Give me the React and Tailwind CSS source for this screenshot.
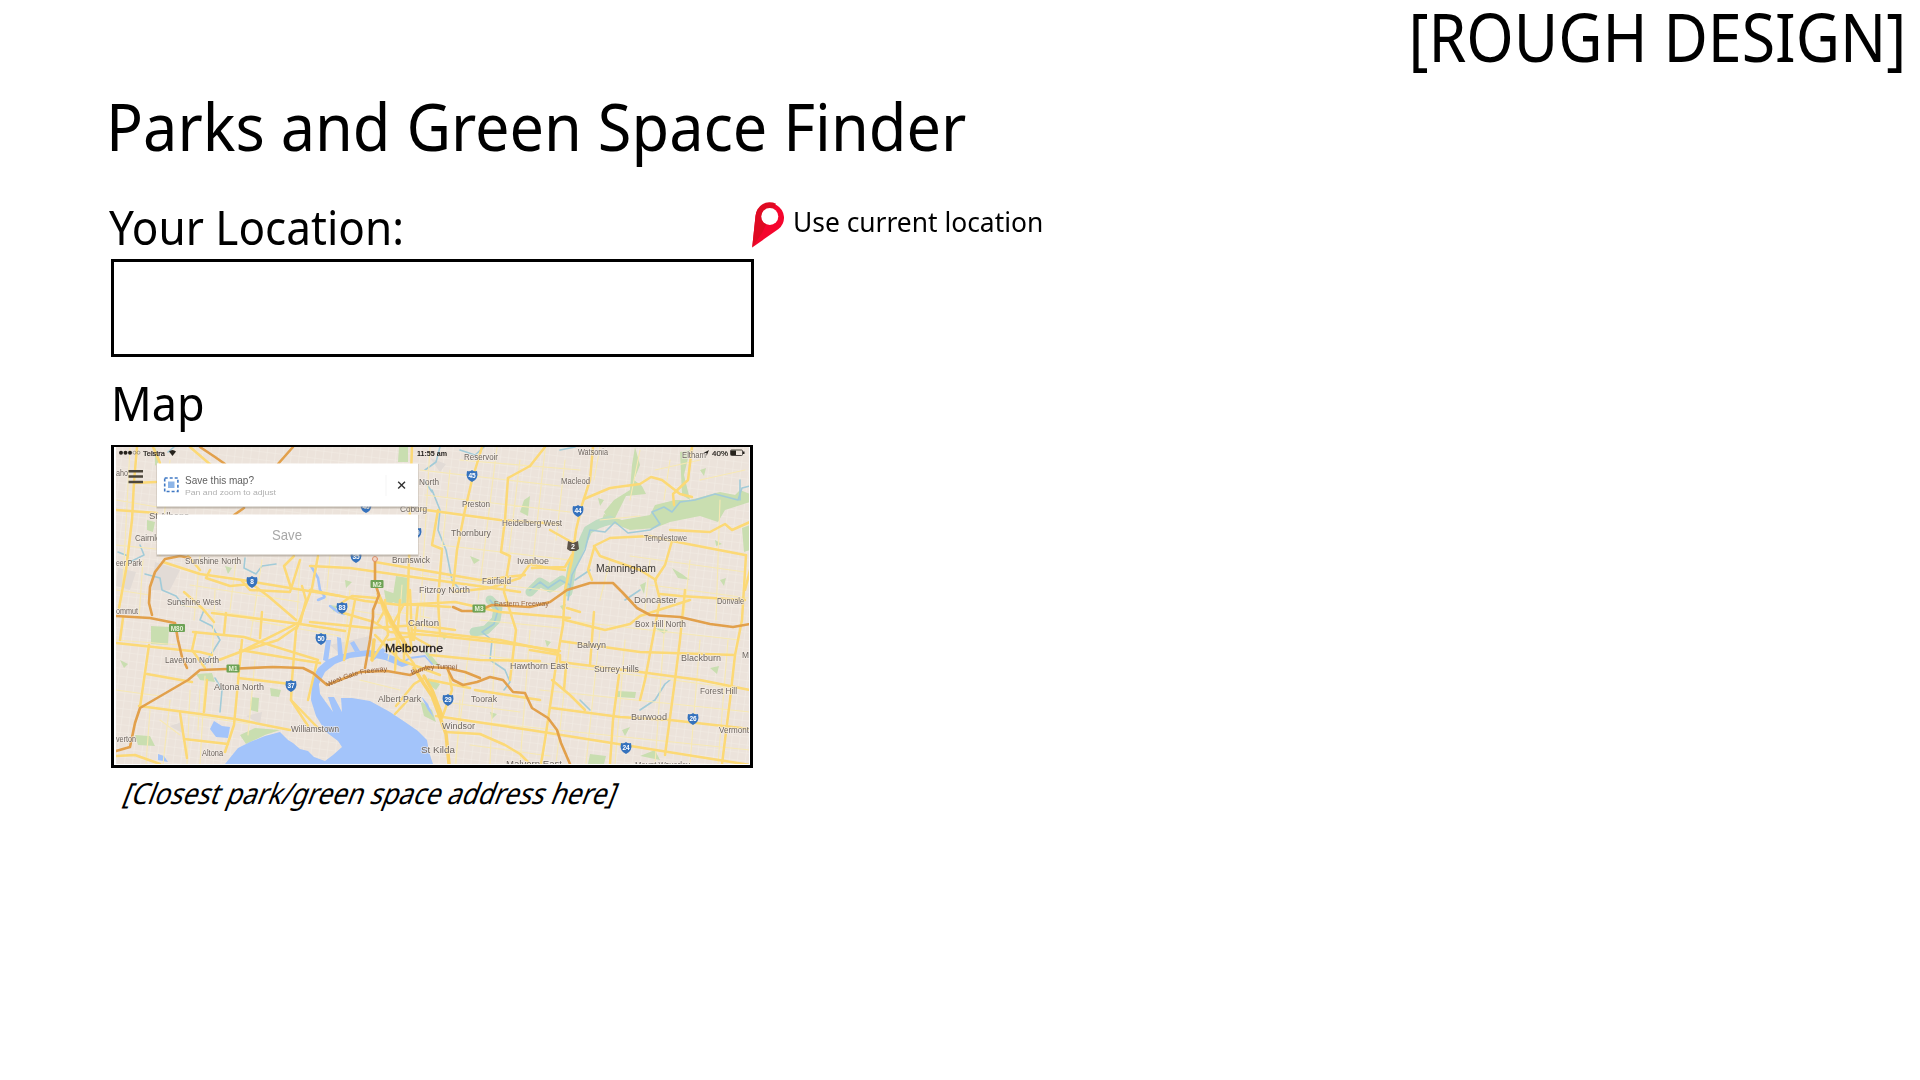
const minor = [
  "M116 500L157 507M116 545L156 549M130 448L122 600M143 560L139 618M170 460L160 556M200 556L194 620M215 590L212 668M236 560L230 610M262 560L250 640M116 640L180 645M190 690L187 764M205 676L200 764M255 660L248 735M300 560L296 640M330 556L326 600M350 590L345 645",
  "M430 447L420 620M450 470L441 560M497 447L478 600M520 460L508 560M545 450L532 570M565 460L556 540M600 447L594 480M640 450L630 500M670 460L664 500M420 470L560 486M425 495L570 512M440 545L570 560M420 575L560 592M460 460L580 470",
  "M610 560L600 600M650 560L645 610M690 560L684 615M720 500L716 620M560 620L740 640M570 640L556 764M600 630L586 764M625 640L615 764M665 620L655 764M700 640L690 764M728 640L718 764M470 640L455 764M495 640L490 764M530 630L520 764M480 655L750 690M460 720L750 750M540 690L750 712M480 620L560 628",
  "M190 520L157 515M116 590L150 595M190 585L300 602M180 605L320 628M250 620L340 636M190 715L250 724M150 710L146 764M170 700L163 764M116 690L160 696M600 520L640 516M655 470L700 460M700 480L745 470M630 556L745 572M650 585L748 598",
  "M392 640L388 660M398 612L430 618M402 585L398 640M425 590L421 650M440 600L436 660M360 680L400 690M460 700L456 764M350 610L400 618M345 625L372 630M430 700L520 712M470 745L550 756M200 690L198 730M160 720L180 735",
];

const yellow = [
  "M137 447L134 482L132 520L126 570L119 608",
  "M116 510L157 513", "M134 483L156 482", "M190 447L212 466", "M153 447L160 463",
  "M163 562L200 574L242 580L290 588L340 596", "M200 570L188 556", "M241 580L250 590L290 592L300 560",
  "M310 566L350 568L420 578L500 589L520 592", "M318 556L312 588L296 630L292 680L291 700L308 726", "M300 624L306 600L302 586",
  "M116 643L200 652L212 655", "M123 618L120 640", "M149 645L140 707", "M147 674L192 682", "M196 632L192 650L205 668", "M193 632L244 637L318 660", "M212 613L300 624L345 631", "M226 613L224 634", "M262 612L260 638", "M244 650L300 622", "M219 660L240 652L278 640L298 626", "M240 650L300 660L320 663",
  "M139 706L200 714L235 719L290 730", "M207 680L204 712", "M242 640L234 725L225 752", "M180 713L187 758", "M184 739L228 744", "M116 756L135 755L160 764", "M238 678L290 684", "M317 662L308 700", "M291 700L318 728", "M184 592L202 608L214 622", "M210 570L206 578L230 586L252 584L268 596L296 620", "M291 588L284 566L294 556",
  "M412 447L410 500L409 560L407 620L412 650", "M482 447L472 480L465 510L457 550L453 588", "M419 509L500 520L560 524", "M438 510L432 545L442 549L438 600L440 635", "M508 478L505 520L501 552L510 556L504 592L516 630L510 680", "M508 478L530 466", "M530 466L545 447",
  "M453 592L490 588L520 578L530 564L548 568L565 570",
  "M375 562L480 580L525 575",
  "M340 612L374 622L390 632L440 636L520 645L560 651", "M310 622L370 628L420 625L455 630", "M310 590L365 601L400 605L455 602L500 612L570 618", "M385 600L388 635L372 660", "M400 600L395 670", "M410 590L412 640", "M355 600L344 660", "M375 635L400 660L440 675", "M412 630L500 640L556 652", "M430 655L480 660L540 661", "M448 668L452 690L442 718",
  "M378 592L384 612L392 626L402 648L414 664", "M386 608L378 622M392 626L404 604L450 607M388 640L412 636L430 646M404 640L404 660M418 604L414 640M376 598L352 596L340 604", "M396 706L414 684L424 678M430 680L470 688",
  "M436 716L530 730L750 765", "M445 732L480 734L505 745L520 754L530 764", "M408 700L395 714",
  "M593 447L590 480L582 505L576 530L572 560L565 590L563 625L556 665L551 700L545 740L541 764", "M584 499L610 488L640 484L651 477L662 480L680 494L692 497", "M692 447L688 480L673 494L674 505",
  "M550 530L575 544", "M594 546L610 538L650 536L672 541L745 555", "M670 530L710 532L725 524L732 530L750 522", "M672 541L665 565L655 580L660 600L645 680L640 700", "M594 546L600 556L640 570L656 580", "M594 548L588 570L592 580", "M532 568L565 567L572 555", "M580 612L567 608", "M565 620L605 630L630 624L640 616L690 600", "M594 612L590 665", "M685 590L680 640L675 680L665 755", "M660 594L680 596L745 600", "M746 555L742 620L735 655L730 700L722 764",
  "M560 641L640 652L735 655", "M530 650L560 655L560 662L640 672L700 680L750 690", "M552 708L620 717L670 720L750 729", "M552 680L570 695L585 710", "M619 675L613 720L610 764", "M566 665L564 690", "M750 570L745 590", "M475 690L540 700",
];

const wide = ["M414 668L424 684L432 696L438 712L446 734L449 764", "M424 676L432 690L442 716", "M378 594L392 622L410 652", "M374 640L372 660"];

const orange = [
  "M200 447L215 457L225 464", "M293 447L278 464", "M244 508L234 515",
  "M116 616L150 618L175 623L178 640L182 657L187 668",
  "M190 558L180 556L165 559L155 572L150 587L149 603L152 615",
  "M116 751L130 747L135 723L140 708L188 680L200 670L227 669L273 667L303 668L313 673L327 685L340 680L360 672L387 671L410 675L427 667L447 668L453 680L463 685L477 682L490 677L503 680L513 692L525 693L532 708L548 718L557 730L561 743L570 764",
  "M447 668L465 672L480 678", "M375 560L375 583L379 595L373 610L373 617L370 640L365 668",
  "M453 607L462 611L477 611L492 605L530 607L550 602L567 590L590 583L613 583L623 593L637 608L650 615L680 617L710 624L733 627L750 624",
];

const parks = [
  "M151 626L169 627L168 645L151 644Z", "M396 576L408 578L406 606L392 602Z", "M384 590L396 594L392 604L386 602Z",
  "M622 520L650 515L655 505L675 500L690 500L720 492L735 495L740 490L750 494L750 502L725 510L718 522L700 516L670 522L655 528L630 530L615 524L600 526L604 514Z", "M742 528L750 525L750 550L744 552Z",
  "M635 447L640 465L634 480L642 486L646 494L626 496L618 512L612 524L604 512L614 500L630 490L632 465Z", "M684 475L690 450L680 452L682 495L690 500Z", "M617 691L636 692L635 698L616 697Z", "M420 700L432 710L436 722L424 716Z",
  "M251 697L259 698L258 712L250 710Z", "M270 688L281 690L279 697L271 696Z", "M135 735L150 736L155 746L138 745Z", "M196 674L212 673L215 682L200 680Z", "M147 520L155 522L153 532L147 530Z", "M399 447L408 447L408 462L398 462Z",
  "M240 735L255 728L280 730L265 735L246 744Z", "M155 447L160 460L155 466Z", "M423 650L430 654L440 666L432 664Z", "M428 678L440 684L436 690L428 684Z",
  "M710 668L719 666L717 674ZM622 730L630 727L625 736ZM524 500L530 496L528 516L520 512ZM470 556L480 560L474 564ZM640 756L655 750L660 760Z",
  "M672 568L682 574L690 580L678 578ZM640 585L646 582L644 594ZM440 632L448 636L444 640ZM598 498L604 500L600 506ZM560 606L566 604L564 612ZM700 470L706 468L704 476ZM720 580L726 578L724 586ZM545 640L551 642L547 647ZM490 712L497 714L492 719ZM330 605L338 606L334 612ZM225 566L232 568L228 574ZM345 580L352 582L346 588ZM590 754L606 756L604 764L588 764ZM120 660L128 664L124 668ZM655 628L668 630L664 634ZM715 540L722 544L716 546Z",
];

const valley = [
  "M568 592L572 566L580 548L588 530L598 524L610 520",
  "M530 592L540 582L550 588L562 580",
  "M490 600L498 608L496 620L486 630L474 632",
];

const streams = [
  "M174 447L168 452M204 610L200 620L212 626L220 640L210 656L205 664", "M145 574L160 578L162 590L176 596L184 606", "M245 558L244 568L256 574L262 566L276 564",
  "M440 447L436 462L425 470M432 490L440 510L438 530L446 550L452 580L460 590", "M424 480L432 492", "M568 600L572 575L585 550L590 530L605 532L615 522L628 533L650 530L660 524L652 512L664 507L672 512L680 502L695 500L715 494L738 500L742 488L750 486",
  "M530 590L540 582L548 588L560 580L570 585", "M490 600L498 610L494 624L482 632L492 640L490 660L505 670L510 682L504 690", "M215 678L222 690L220 712", "M484 447L475 455L460 450", "M140 545L144 555L130 562M118 552L128 556",
  "M640 710L655 700L665 684L670 680", "M590 570L575 580M625 600L640 590M590 710L580 700", "M740 500L740 480M560 450L575 447",
];

// [text, left, baseline, width]
const labels = [
  ["aho", 116, 476, 12], ["St Albans", 149, 519, 40], ["Cairnlea", 135, 541, 30], ["eer Park", 116, 566, 26], ["Sunshine North", 185, 564, 56],
  ["Sunshine West", 167, 605, 54], ["Reservoir", 464, 460, 34], ["North", 419, 485, 20], ["Preston", 462, 507, 28], ["Coburg", 400, 512, 27],
  ["Heidelberg West", 502, 526, 60], ["Thornbury", 451, 536, 40], ["Brunswick", 392, 563, 38], ["Fitzroy North", 419, 593, 51], ["Fairfield", 482, 584, 29],
  ["Ivanhoe", 517, 564, 32], ["Watsonia", 578, 455, 30], ["Macleod", 561, 484, 29], ["Eltham", 682, 458, 24], ["Templestowe", 644, 541, 43],
  ["Doncaster", 634, 603, 43], ["Donvale", 717, 604, 27], ["ommut", 116, 614, 22], ["Laverton North", 165, 663, 54], ["Altona North", 214, 690, 50],
  ["Williamstown", 291, 732, 48], ["verton", 116, 742, 20], ["Altona", 202, 756, 21], ["Carlton", 408, 626, 31], ["Hawthorn East", 510, 669, 58],
  ["Albert Park", 378, 702, 43], ["Toorak", 471, 702, 26], ["Windsor", 442, 729, 33], ["St Kilda", 421, 753, 34], ["Malvern East", 506, 766.5, 56],
  ["Box Hill North", 635, 627, 51], ["Balwyn", 577, 648, 29], ["Blackburn", 681, 661, 40], ["M", 742, 658, 7], ["Surrey Hills", 594, 672, 45],
  ["Forest Hill", 700, 694, 37], ["Burwood", 631, 720, 36], ["Vermont", 719, 733, 30], ["Mount Waverley", 635, 768, 55],
];

const shields = [["8", 252, 582], ["45", 472, 476], ["40", 366, 507], ["39", 416, 533], ["35", 356, 557], ["83", 342, 608], ["50", 321, 639], ["44", 578, 511], ["37", 291, 686], ["29", 448, 700], ["26", 693, 719], ["24", 626, 748]];
const plates = [["M2", 377, 584], ["M3", 479, 608.5], ["M80", 177, 628], ["M1", 233, 668.5]];

function MelbourneMap() {
  return (
    <svg viewBox="116 447 633 317" className="block h-[317px] w-[633px]" fontFamily="'Liberation Sans', Arial, sans-serif">
      <defs>
        <pattern id="streets" width="8" height="8" patternUnits="userSpaceOnUse" patternTransform="rotate(7)">
          <path d="M0 0H8M0 0V8" stroke="#f3ede6" strokeWidth="1.1" />
        </pattern>
        <filter id="soft" x="-5%" y="-5%" width="110%" height="110%"><feGaussianBlur stdDeviation="0.6" /></filter>
        <filter id="softText" x="-5%" y="-5%" width="110%" height="110%"><feGaussianBlur stdDeviation="0.35" /></filter>
      </defs>
      <rect x="116" y="447" width="634" height="317" fill="#ece3db" />
      <rect x="116" y="447" width="634" height="317" fill="url(#streets)" />
      <g filter="url(#soft)" fill="none" strokeLinejoin="round" strokeLinecap="round">
        <path d="M330 645L370 636L376 640L368 650L340 654ZM155 562L180 570L170 590L152 590ZM118 568L136 572L130 590L116 586ZM246 716L262 712L260 724ZM170 726L182 722L184 734ZM430 458L446 464L440 472Z" fill="#e2dbd6" />
        {parks.map((d) => <path key={d} d={d} fill="#c9deb0" />)}
        {valley.map((d) => <path key={d} d={d} stroke="#bfdcc0" strokeWidth="9" />)}
        {streams.map((d) => <path key={d} d={d} stroke="#a2cbd8" strokeWidth="1.6" />)}
        <path d="M225 764L238 748L250 742L265 736L280 732L288 740L293 743L300 749L308 751L314 757L325 761L333 755L342 747L338 741L326 732L316 716L311 700L312 678L318 668L327 660L338 655L352 652L368 650L383 652L405 661L412 664L402 667L385 660L366 656L350 658L335 664L325 672L319 684L320 694L325 701L333 712L328 697L334 697L342 712L341 698L352 698L370 701L390 712L405 722L418 731L427 740L429 752L433 764Z" fill="#a3c4fa" />
        <path d="M326 640L331 640L328 662L323 660ZM337 637L341 638L343 656L338 656ZM354 641L360 651L355 652L350 643ZM370 655L383 648L386 651L374 660Z" fill="#a3c4fa" />
        <path d="M210 729L214 721L222 726L230 727L228 738L216 737ZM158 754L164 756L168 762L158 760ZM421 696L428 704L434 718L428 710Z" fill="#a3c4fa" />
        <path d="M311 566L318 578L320 590L325 597L318 600M330 606L338 612L344 614" stroke="#a3c4fa" strokeWidth="2.5" />
        <path d="M400 664L410 658L425 656L432 664" stroke="#a3c4fa" strokeWidth="1.8" />
        {minor.map((d) => <path key={d} d={d} stroke="#f7e9b4" strokeWidth="1.1" />)}
        {yellow.map((d) => <path key={d} d={d} stroke="#fcd976" strokeWidth="2.5" />)}
        {wide.map((d) => <path key={d} d={d} stroke="#fad36c" strokeWidth="3.5" />)}
        {orange.map((d) => <path key={d} d={d} stroke="#e2a04c" strokeWidth="2.6" />)}
        <circle cx="375" cy="559" r="2.5" fill="#f1d5c5" stroke="#e08f6a" />
      </g>
      <g filter="url(#softText)">
        {labels.map(([t, x, y, w]) => (
          <text key={t + x} x={x} y={y} fontSize="8.5" textLength={w} lengthAdjust="spacingAndGlyphs" fill="#6d655f" stroke="#f5efe9" strokeWidth="1.4" strokeOpacity="0.7" paintOrder="stroke">{t}</text>
        ))}
        <text x="596" y="571.5" fontSize="10.5" textLength="60" lengthAdjust="spacingAndGlyphs" fill="#3b3836">Manningham</text>
        <text x="385" y="651.5" fontSize="11" textLength="58" lengthAdjust="spacingAndGlyphs" fill="#1f1c1a" stroke="#1f1c1a" strokeWidth="0.3">Melbourne</text>
        <text x="494" y="606" fontSize="7" textLength="55" lengthAdjust="spacingAndGlyphs" fill="#9a6a45">Eastern Freeway</text>
        <path id="westgate" d="M328 687Q355 672 390 671" fill="none" />
        <path id="burnley" d="M412 675Q432 666 460 670" fill="none" />
        <text fontSize="7" fill="#8c5c3c"><textPath href="#westgate" textLength="62">West Gate Freeway</textPath></text>
        <text fontSize="7" fill="#8c5c3c"><textPath href="#burnley" textLength="46">Burnley Tunnel</textPath></text>
        {shields.map(([t, x, y]) => (
          <g key={t}>
            <path d={`M${x - 5} ${y - 5}Q${x - 2} ${y - 4} ${x} ${y - 6}Q${x + 2} ${y - 4} ${x + 5} ${y - 5}Q${x + 7} ${y + 3} ${x} ${y + 6}Q${x - 7} ${y + 3} ${x - 5} ${y - 5}Z`} fill="#3672bd" />
            <text x={x} y={y + 2.3} fontSize="6.5" fontWeight="bold" textAnchor="middle" fill="#fff">{t}</text>
          </g>
        ))}
        {plates.map(([t, x, y]) => (
          <g key={t}>
            <rect x={x - (t.length > 2 ? 8 : 6.5)} y={y - 4} width={t.length > 2 ? 16 : 13} height="8" rx="1" fill="#6da254" />
            <text x={x} y={y + 2.5} fontSize="6.5" fontWeight="bold" textAnchor="middle" fill="#e9f2d9">{t}</text>
          </g>
        ))}
        <path d="M568 541L573 543L578 541L579 549L576 551H570L567 549Z" fill="#5c5248" />
        <text x="573" y="549" fontSize="7" fontWeight="bold" textAnchor="middle" fill="#fff">2</text>

        <rect x="156.500" y="464" width="262" height="44.500" fill="#8b8375" opacity="0.45" />
        <rect x="156.500" y="515" width="262" height="41.500" fill="#8b8375" opacity="0.45" />
        <rect x="157" y="463.500" width="261" height="43" fill="#fff" />
        <rect x="157" y="514.500" width="261" height="40" fill="#fff" />
        <path d="M386 475V496" stroke="#f5f5f5" />
        <path d="M398.200 481.800L405 488.500M405 481.800L398.200 488.500" stroke="#333" strokeWidth="1.4" />
        <rect x="164.700" y="478" width="13.200" height="13.500" fill="none" stroke="#3f78c4" strokeWidth="1.600" strokeDasharray="3 2" />
        <rect x="168" y="481.500" width="6.500" height="6.500" fill="#8db5e8" />
        <text x="185" y="483.500" fontSize="11" textLength="69" lengthAdjust="spacingAndGlyphs" fill="#606060">Save this map?</text>
        <text x="185" y="494.500" fontSize="8" textLength="91" lengthAdjust="spacingAndGlyphs" fill="#b0b0b0">Pan and zoom to adjust</text>
        <text x="272" y="540" fontSize="15" textLength="30" lengthAdjust="spacingAndGlyphs" fill="#a8a8a8">Save</text>
        <path d="M128.500 471.200H143M128.500 476.500H143M128.500 482H143" stroke="#4b443b" strokeWidth="2.500" />

        <g fill="#27231f">
          <circle cx="121" cy="452.700" r="2" /><circle cx="125.500" cy="452.700" r="2" /><circle cx="130" cy="452.700" r="2" />
          <g fill="none" stroke="#77706a" strokeWidth="0.6"><circle cx="134.500" cy="452.700" r="1.500" /><circle cx="138.500" cy="452.700" r="1.500" /></g>
          <text x="143" y="455.500" fontSize="7.500" textLength="22" lengthAdjust="spacingAndGlyphs" stroke="#27231f" strokeWidth="0.2">Telstra</text>
          <path d="M169 451.500Q172.500 448.500 176 451.500L172.500 456Z" />
          <text x="417" y="455.500" fontSize="8" fontWeight="bold" textLength="30" lengthAdjust="spacingAndGlyphs">11:55 am</text>
          <path d="M709 450L703.500 453H706.500V456Z" />
          <text x="712" y="455.500" fontSize="8" textLength="16" lengthAdjust="spacingAndGlyphs" stroke="#27231f" strokeWidth="0.2">40%</text>
          <rect x="730.500" y="450" width="12" height="5.500" rx="1" fill="none" stroke="#27231f" strokeWidth="0.8" />
          <rect x="731" y="450.500" width="5" height="4.500" /><rect x="743" y="451.500" width="1.500" height="2.500" />
        </g>
      </g>
    </svg>
  );
}

function PinIcon() {
  return (
    <svg viewBox="0 0 34 48" className="h-[48px] w-[34px]">
      <path d="M1.200 46.500L4.500 15A14.300 14.300 0 1 1 27.500 28Z" fill="#f5052d" />
      <path d="M1.200 46.500L4.500 15A14.300 14.300 0 0 1 25 2.700L11 32Z" fill="#df0a22" />
      <circle cx="18.800" cy="15.500" r="8.500" fill="#fff" />
    </svg>
  );
}

export default function App() {
  return (
    <div className="flex h-screen w-full flex-col overflow-hidden bg-white font-['Noto_Sans',sans-serif] text-black">
      <header className="flex h-[94px] items-start justify-end pt-[3px] pr-[14px]">
        <p className="origin-right scale-x-[0.908] text-[67px] leading-none whitespace-nowrap">[ROUGH DESIGN]</p>
      </header>
      <main className="flex flex-col items-start pl-[111px]">
        <h1 className="-ml-[5px] h-[107px] origin-left scale-x-[0.942] text-[65px] leading-none whitespace-nowrap">Parks and Green Space Finder</h1>
        <div className="flex h-[58px] items-start">
          <label htmlFor="location" className="w-[640px] pt-[2px] text-[47.500px] leading-none whitespace-nowrap">
            <span className="-ml-[2px] inline-block origin-left scale-x-[0.928]">Your Location:</span>
          </label>
          <button type="button" className="flex items-start">
            <PinIcon />
            <span className="mt-[6px] ml-2 inline-block origin-left scale-x-[0.942] text-[28px] leading-none whitespace-nowrap">Use current location</span>
          </button>
        </div>
        <input id="location" type="text" className="h-[98px] w-[643px] border-3 border-black bg-white" />
        <h2 className="mt-[22px] h-[66px] origin-left scale-x-[0.945] text-[47.500px] leading-none">Map</h2>
        <div className="h-[323px] w-[642px] border-3 border-t-2 border-black bg-white pl-[2px]">
          <MelbourneMap />
        </div>
        <p className="mt-[10px] ml-[9px] origin-bottom-left scale-x-[0.9] -skew-x-[23deg] text-[29px] leading-none whitespace-nowrap">[Closest park/green space address here]</p>
      </main>
    </div>
  );
}
